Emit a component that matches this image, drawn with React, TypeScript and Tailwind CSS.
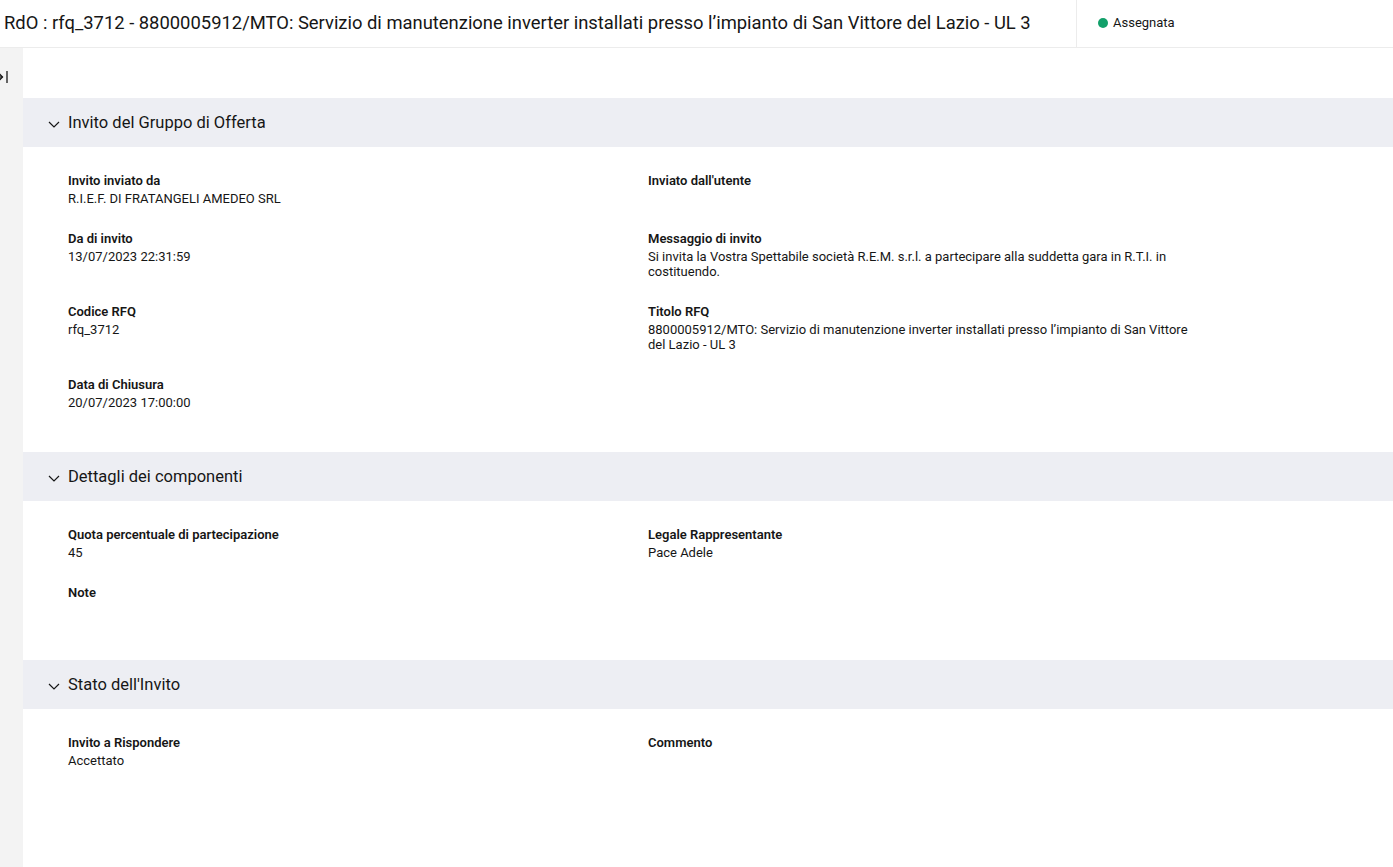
import React from 'react'

type Field = { label: string; value?: string }
type Section = { title: string; rows: [Field, Field | null][] }

const SECTIONS: Section[] = [
  {
    title: 'Invito del Gruppo di Offerta',
    rows: [
      [
        { label: 'Invito inviato da', value: 'R.I.E.F. DI FRATANGELI AMEDEO SRL' },
        { label: "Inviato dall'utente" },
      ],
      [
        { label: 'Da di invito', value: '13/07/2023 22:31:59' },
        {
          label: 'Messaggio di invito',
          value: 'Si invita la Vostra Spettabile società R.E.M. s.r.l. a partecipare alla suddetta gara in R.T.I. in costituendo.',
        },
      ],
      [
        { label: 'Codice RFQ', value: 'rfq_3712' },
        {
          label: 'Titolo RFQ',
          value: '8800005912/MTO: Servizio di manutenzione inverter installati presso l’impianto di San Vittore del Lazio - UL 3',
        },
      ],
      [{ label: 'Data di Chiusura', value: '20/07/2023 17:00:00' }, null],
    ],
  },
  {
    title: 'Dettagli dei componenti',
    rows: [
      [
        { label: 'Quota percentuale di partecipazione', value: '45' },
        { label: 'Legale Rappresentante', value: 'Pace Adele' },
      ],
      [{ label: 'Note' }, null],
    ],
  },
  {
    title: "Stato dell'Invito",
    rows: [[{ label: 'Invito a Rispondere', value: 'Accettato' }, { label: 'Commento' }]],
  },
]

function Chevron() {
  return (
    <svg width="12" height="12" viewBox="0 0 12 12" fill="none" className="shrink-0">
      <path d="M1 4 L6 9 L11 4" stroke="#161616" strokeWidth="1.2" />
    </svg>
  )
}

function FieldBlock({ f }: { f: Field | null }) {
  if (!f) return <div />
  return (
    <div className="mb-[25px]">
      <div className="text-[13px] leading-[15px] font-semibold text-[#161616] mb-[3px]">{f.label}</div>
      <div className="text-[13px] leading-[15px] min-h-[15px] text-[#161616]">{f.value}</div>
    </div>
  )
}

function SectionBlock({ s }: { s: Section }) {
  return (
    <section>
      <div className="h-[49px] bg-[#edeef3] flex items-center gap-[8px] pl-[25px] pt-[2px]">
        <Chevron />
        <span className="text-[16.5px] text-[#161616]">{s.title}</span>
      </div>
      <div className="grid grid-cols-[580px_550px] pl-[45px] pt-[26px] pb-[17px]">
        {s.rows.map(([l, r], i) => (
          <React.Fragment key={i}>
            <FieldBlock f={l} />
            <FieldBlock f={r} />
          </React.Fragment>
        ))}
      </div>
    </section>
  )
}

export default function App() {
  return (
    <div className="w-[1393px] h-[867px] overflow-hidden bg-white flex flex-col text-[#161616] font-['Roboto','Liberation_Sans',sans-serif]">
      <header className="h-[48px] shrink-0 flex border-b border-[#ececec]">
        <div className="w-[1077px] shrink-0 flex items-center pl-[4px] border-r border-[#ececec] overflow-hidden whitespace-nowrap">
          <h1 className="text-[18.4px] leading-[22px] pb-[2px]">
            RdO : rfq_3712 - 8800005912/MTO: Servizio di manutenzione inverter installati presso l’impianto di San Vittore del Lazio - UL 3
          </h1>
        </div>
        <div className="flex items-center gap-[5px] pl-[21px] pb-[2px]">
          <span className="w-[10px] h-[10px] rounded-full bg-[#12a06a]" />
          <span className="text-[13px]">Assegnata</span>
        </div>
      </header>

      <div className="flex flex-1 min-h-0">
        <aside className="w-[23px] shrink-0 bg-[#f3f3f3] relative">
          <svg width="12" height="14" viewBox="0 0 12 14" fill="none" className="absolute left-[-3px] top-[22px]">
            <path d="M1 2.5 L5.5 7 L1 11.5" stroke="#161616" strokeWidth="1.3" />
            <path d="M5.5 7 H0" stroke="#161616" strokeWidth="1.3" />
            <path d="M10 1 V13" stroke="#161616" strokeWidth="1.3" />
          </svg>
        </aside>
        <main className="flex-1 pt-[50px]">
          {SECTIONS.map((s) => (
            <SectionBlock key={s.title} s={s} />
          ))}
        </main>
      </div>
    </div>
  )
}
